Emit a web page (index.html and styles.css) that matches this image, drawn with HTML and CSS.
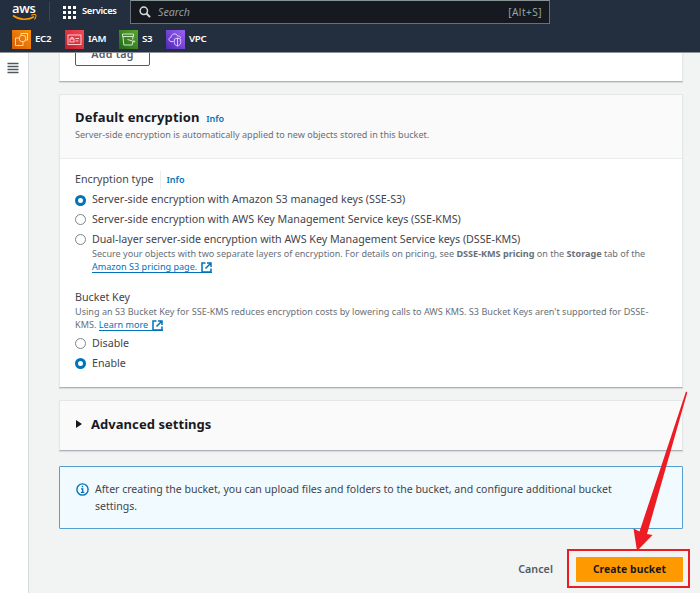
FILE: index.html
```html
<!DOCTYPE html>
<html lang="en">
<head>
<meta charset="utf-8">
<title>Create bucket</title>
<link rel="stylesheet" href="styles.css">
</head>
<body>
<header class="topnav">
  <div class="topnav-main">
    <div class="logo">
      <span class="logo-text">aws</span>
      <svg class="logo-smile" viewBox="0 0 26 8"><path d="M1 1.500C7 6 16 6.500 22 2.800" fill="none" stroke="#f90" stroke-width="1.600"/><path d="M19.300 1.200c2-.8 4-.8 4.500-.2s0 2.800-1.400 4.300" fill="none" stroke="#f90" stroke-width="1.100"/></svg>
    </div>
    <div class="services">
      <svg width="13" height="13" viewBox="0 0 13 13" fill="#fff"><path d="M0 0h3v3H0zM5 0h3v3H5zM10 0h3v3h-3zM0 5h3v3H0zM5 5h3v3H5zM10 5h3v3h-3zM0 10h3v3H0zM5 10h3v3H5zM10 10h3v3h-3z"/></svg>
      <span>Services</span>
    </div>
    <div class="search">
      <svg width="12" height="12" viewBox="0 0 12 12" fill="none" stroke="#d5dbdb"><circle cx="4.800" cy="4.800" r="3.700" stroke-width="1.500"/><path d="M7.500 7.500l3.500 3.700" stroke-width="1.900"/></svg>
      <span class="search-label">Search</span>
      <span class="search-key">[Alt+S]</span>
    </div>
  </div>
  <nav class="favorites">
    <a class="fav ec2"><svg class="tile" viewBox="0 0 19 19"><g fill="none" stroke="#fde3c4" stroke-width=".9"><rect x="7.500" y="5.500" width="6" height="6" rx="2"/><path d="M9 5.500V3.500h6.500V10H13.500M7 8H3.500v7.500H11V12"/></g></svg>EC2</a>
    <a class="fav iam"><svg class="tile" viewBox="0 0 19 19"><g fill="none" stroke="#ffdadc" stroke-width=".9"><rect x="3" y="5" width="13" height="9.500"/><rect x="5" y="9" width="4" height="3"/><path d="M6 9V7.500h2V9M10.500 8.500h3.500M10.500 11h3"/></g></svg>IAM</a>
    <a class="fav s3"><svg class="tile" viewBox="0 0 19 19"><g fill="none" stroke="#e1f2d8" stroke-width=".9"><path d="M3.500 4h11v2.500h-11zM4 6.500l.8 8.500h8.400l.4-3M13.700 9.500l.3-3M8.500 9.500l6.500 2"/><circle cx="15" cy="11.500" r=".7"/></g></svg>S3</a>
    <a class="fav vpc"><svg class="tile" viewBox="0 0 19 19"><g fill="none" stroke="#e4d6ff" stroke-width=".9"><path d="M7.500 11.500H5c-3-.5-2.500-4 0-4C5 3.500 10.500 2.500 11.500 6c2-.3 3 .5 3 2"/><path d="M11.500 8l3.200 1.200v3.300c0 2-1.700 3-3.200 3.500-1.500-.5-3.200-1.500-3.200-3.500V9.200zM11.500 8v8"/></g></svg>VPC</a>
  </nav>
</header>
<div class="layout">
  <aside class="rail"><svg width="12" height="12" viewBox="0 0 12 12"><path d="M.5 1.500h11M.5 4.500h11M.5 7.500h11M.5 10.500h11" stroke="#4f5861" stroke-width="1.400"/></svg></aside>
  <main class="content">
    <section class="card tags"><div class="tag-btn">Add tag</div></section>
    <section class="card encryption">
      <div class="card-head">
        <h2>Default encryption <a class="info">Info</a></h2>
        <p class="hint">Server-side encryption is automatically applied to new objects stored in this bucket.</p>
      </div>
      <div class="card-body">
        <div class="label type-label"><span>Encryption type</span><a class="info divided">Info</a></div>
        <div class="option"><i class="radio on"></i><span>Server-side encryption with Amazon S3 managed keys (SSE-S3)</span></div>
        <div class="option"><i class="radio"></i><span>Server-side encryption with AWS Key Management Service keys (SSE-KMS)</span></div>
        <div class="option dual"><i class="radio"></i><span>Dual-layer server-side encryption with AWS Key Management Service keys (DSSE-KMS)</span></div>
        <p class="hint nested">Secure your objects with two separate layers of encryption. For details on pricing, see <b>DSSE-KMS pricing</b> on the <b>Storage</b> tab of the<br><a class="link">Amazon S3 pricing page. <svg class="ext" viewBox="0 0 11 11"><path d="M4.500 1H1v9h9V6.500M6 1h4v4M10 1L4.500 6.500"/></svg></a></p>
        <div class="label key-label">Bucket Key</div>
        <p class="hint key-hint">Using an S3 Bucket Key for SSE-KMS reduces encryption costs by lowering calls to AWS KMS. S3 Bucket Keys aren't supported for DSSE-<br>KMS. <a class="link">Learn more <svg class="ext" viewBox="0 0 11 11"><path d="M4.500 1H1v9h9V6.500M6 1h4v4M10 1L4.500 6.500"/></svg></a></p>
        <div class="option"><i class="radio"></i><span>Disable</span></div>
        <div class="option"><i class="radio on"></i><span>Enable</span></div>
      </div>
    </section>
    <section class="card advanced"><i class="caret"></i><h2>Advanced settings</h2></section>
    <section class="notice">
      <svg width="13" height="13" viewBox="0 0 13 13"><circle cx="6.500" cy="6.500" r="5.600" fill="none" stroke="#0073bb" stroke-width="1.400"/><path d="M5 5.800h1.700v3.500M4.900 9.400h3.400M5.800 3.500h1.300" fill="none" stroke="#0073bb" stroke-width="1.300"/></svg>
      <p>After creating the bucket, you can upload files and folders to the bucket, and configure additional bucket<br>settings.</p>
    </section>
    <div class="actions">
      <span class="cancel">Cancel</span>
      <span class="highlight"><span class="create">Create bucket</span></span>
    </div>
  </main>
</div>
<svg class="arrow" width="60" height="162" viewBox="630 390 60 162"><path d="M686 391.500L687.300 392.500L647 534L652.500 535L637 551L633.500 528.500L639.500 531.500Z" fill="#ed1c24"/></svg>
</body>
</html>
```
FILE: styles.css
```css
* { box-sizing: border-box; }
body {
  margin: 0;
  height: 593px;
  overflow: hidden;
  background: #f2f3f3;
  color: #3f444c;
  font: 10.7px/20px "Noto Sans", "Open Sans", sans-serif;
}
h2, p { margin: 0; }
i { font-style: normal; flex: none; }
svg { flex: none; }

.topnav {
  position: relative;
  z-index: 1;
  height: 53px;
  background: #232f3e;
  border-bottom: 1px solid #8d9097;
  color: #fff;
  font-weight: 600;
}
.topnav-main { display: flex; height: 24px; }
.logo {
  width: 50px;
  height: 19px;
  margin-top: 2px;
  padding-left: 12px;
  border-right: 1px solid #3c4653;
}
.logo-text {
  display: block;
  height: 12px;
  font: 600 13px/12px "Open Sans", sans-serif;
  letter-spacing: -0.3px;
}
.logo-smile { display: block; width: 26px; height: 8px; }
.services {
  display: flex;
  width: 80px;
  padding-left: 13px;
  gap: 6px;
  font-size: 9.300px;
  line-height: 21px;
  letter-spacing: -0.3px;
}
.services svg { margin-top: 6px; }
.search {
  display: flex;
  align-items: center;
  width: 420px;
  height: 24px;
  padding: 0 7px 0 8px;
  background: #161a20;
  border: 1px solid #687078;
  border-top-color: #879596;
  font-weight: 400;
}
.search-label { margin-left: 7px; color: #929c9e; font-size: 10.700px; font-style: italic; }
.search-key { margin-left: auto; color: #95a5a6; font-size: 10px; letter-spacing: 0.500px; }
.favorites { display: flex; padding: 5px 0 0 12px; }
.fav {
  display: flex;
  align-items: center;
  height: 20px;
  gap: 4px;
  font-size: 9.700px;
  letter-spacing: -0.3px;
}
.tile { width: 19px; height: 19px; }
.ec2 { width: 53px; }
.iam { width: 54px; }
.s3 { width: 47px; }
.ec2 .tile { background: linear-gradient(45deg, #d45b07, #fb9408); }
.iam .tile { background: linear-gradient(45deg, #c41b2b, #f34b55); }
.s3 .tile { background: linear-gradient(45deg, #1e6a18, #5ba531); }
.vpc .tile { background: linear-gradient(45deg, #5029b4, #9b61f5); }

.layout { display: flex; height: 540px; }
.rail { width: 29px; background: #fff; border-right: 1px solid #d9dcdc; padding: 9px 0 0 7px; line-height: 12px; }
.content { width: 664px; padding-left: 30px; }

.card {
  width: 624px;
  background: #fff;
  border: 1px solid #e4e7e7;
  border-bottom-color: #aab3b6;
  box-shadow: 0 1px 1px #00141c18;
}
.tags { display: flow-root; height: 29px; padding-left: 15px; border-top: 0; }
.tag-btn {
  width: 75px;
  height: 23px;
  margin-top: -10px;
  border: 1px solid #545b64;
  border-radius: 2px;
  color: #545b64;
  font-weight: 600;
  line-height: 20px;
  text-align: center;
  letter-spacing: 0.250px;
}
.encryption { height: 294px; margin-top: 12px; }
.card-head { height: 64px; padding: 13px 15px 0; background: #fafafa; border-bottom: 1px solid #eaeded; }
h2 { color: #16191f; font-size: 13px; font-weight: 700; line-height: 18px; }
.card-head h2 { letter-spacing: 0.150px; }
.info { color: #0073bb; font-size: 9px; font-weight: 600; letter-spacing: 0; }
.card-head .info { margin-left: 3px; }
.hint { color: #687078; font-size: 9.080px; line-height: 12.500px; white-space: nowrap; }
.card-head .hint { margin-top: 1px; }
.card-body { padding: 12px 15px 0; }
.label { line-height: 17px; height: 18px; }
.type-label { display: flex; }
.divided { margin-left: 6px; padding-left: 6px; border-left: 1px solid #eaeded; }
.option { display: flex; gap: 6px; height: 20px; white-space: nowrap; }
.radio {
  width: 11px;
  height: 11px;
  margin-top: 5px;
  border: 1px solid #7c858d;
  border-radius: 50%;
  background: #fff;
}
.radio.on { border: 3.500px solid #0073bb; }
.type-label + .option .radio { margin-top: 6px; }
.dual { height: 19px; }
.dual span { letter-spacing: -0.020px; }
.nested { margin-left: 17px; letter-spacing: -0.008px; }
.link { color: #0073bb; border-bottom: 1px solid #0073bb; display: inline-block; height: 12px; line-height: 12px; }
.ext { width: 11px; height: 11px; margin-left: 1px; vertical-align: -3px; fill: none; stroke: #0073bb; stroke-width: 1.500; }
.key-label { margin-top: 15px; line-height: 18px; }
.key-hint { letter-spacing: 0.015px; }
.key-hint + .option { margin-top: 2px; }

.advanced { display: flex; align-items: center; height: 51px; margin-top: 12px; padding: 0 0 4px 16px; background: #fafafa; }
.caret { border: 4px solid transparent; border-left: 6px solid #16191f; border-right: 0; }
.advanced h2 { margin-left: 9px; letter-spacing: 0.050px; }
.notice {
  display: flex;
  gap: 6px;
  width: 624px;
  height: 63px;
  margin-top: 15px;
  padding: 14px 16px;
  background: #f1faff;
  border: 1px solid #559fd0;
  border-radius: 1px;
  line-height: 16.500px;
}
.notice svg { margin-top: 2px; }
.notice p { font-size: 10.540px; white-space: nowrap; }
.actions { display: flex; justify-content: flex-end; align-items: center; margin-top: 20px; gap: 14px; padding-right: 3px; }
.cancel { color: #545b64; font-weight: 600; letter-spacing: 0.050px; }
.highlight { width: 123px; height: 39px; border: 2px solid #ed1c24; padding: 6px 5px 6px 7px; }
.create {
  display: block;
  height: 25px;
  background: #f90;
  border-radius: 1px;
  color: #16191f;
  font-size: 10.300px;
  font-weight: 700;
  line-height: 24px;
  text-align: center;
  letter-spacing: 0.080px;
}
.arrow { position: absolute; left: 630px; top: 390px; z-index: 2; }
```
